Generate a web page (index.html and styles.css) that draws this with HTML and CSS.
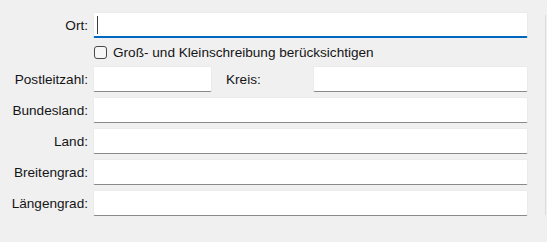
FILE: index.html
```html
<!DOCTYPE html>
<html lang="de">
<head>
  <meta charset="UTF-8">
  <title>Ort suchen</title>
  <link rel="stylesheet" href="styles.css">
</head>
<body>

  <div class="panel">
    <div class="form">
      <div class="row row-ort">
        <label class="lbl">Ort:</label>
        <div class="field focused"><span class="caret"></span></div>
      </div>

      <div class="row row-check">
        <span class="box"></span>
        <span class="check-text">Groß- und Kleinschreibung berücksichtigen</span>
      </div>

      <div class="row">
        <label class="lbl">Postleitzahl:</label>
        <div class="field plz"></div>
        <label class="lbl-kreis">Kreis:</label>
        <div class="field"></div>
      </div>

      <div class="row">
        <label class="lbl">Bundesland:</label>
        <div class="field"></div>
      </div>

      <div class="row">
        <label class="lbl">Land:</label>
        <div class="field"></div>
      </div>

      <div class="row">
        <label class="lbl">Breitengrad:</label>
        <div class="field"></div>
      </div>

      <div class="row">
        <label class="lbl">Längengrad:</label>
        <div class="field"></div>
      </div>
    </div>
    <div class="edge"></div>
  </div>

</body>
</html>
```

FILE: styles.css
```css
body {
  margin: 0;
  background-color: #f0f0f0;
  font-family: 'Liberation Sans', Arial, sans-serif;
  font-size: 13.6px;
  color: #151515;
}
.panel {
  display: flex;
  width: 547px;
  height: 242px;
}
.form {
  width: 528px;
  padding-top: 12px;
}
.edge {
  margin-left: 17px;
  margin-top: 15px;
  height: 200px;
  border-left: 1px solid #dcdcdc;
}
.row {
  display: flex;
  align-items: center;
  height: 26px;
  margin-top: 5px;
}
.row-ort {
  margin-top: 0;
}
.row-check {
  height: 20px;
  margin-top: 4px;
  padding-left: 94px;
}
.row-check + .row {
  margin-top: 4px;
}
.lbl {
  width: 88px;
  margin-right: 5px;
  text-align: right;
  white-space: nowrap;
}
.lbl-kreis {
  width: 87px;
  margin-left: 14px;
}
.field {
  flex: 1;
  height: 26px;
  box-sizing: border-box;
  background-color: #ffffff;
  border: 1px solid #ebebeb;
  border-bottom: 1px solid #8a8a8a;
  border-radius: 2px;
  display: flex;
  align-items: center;
}
.field.plz {
  flex: none;
  width: 119px;
}
.field.focused {
  border-bottom: 2px solid #0067c0;
}
.caret {
  width: 1px;
  height: 18px;
  margin-left: 3px;
  background-color: #3c3c3c;
}
.box {
  width: 13px;
  height: 13px;
  box-sizing: border-box;
  border: 1px solid #4a4a4a;
  border-radius: 3px;
  background-color: #f7f7f7;
  margin-right: 6px;
}
```
